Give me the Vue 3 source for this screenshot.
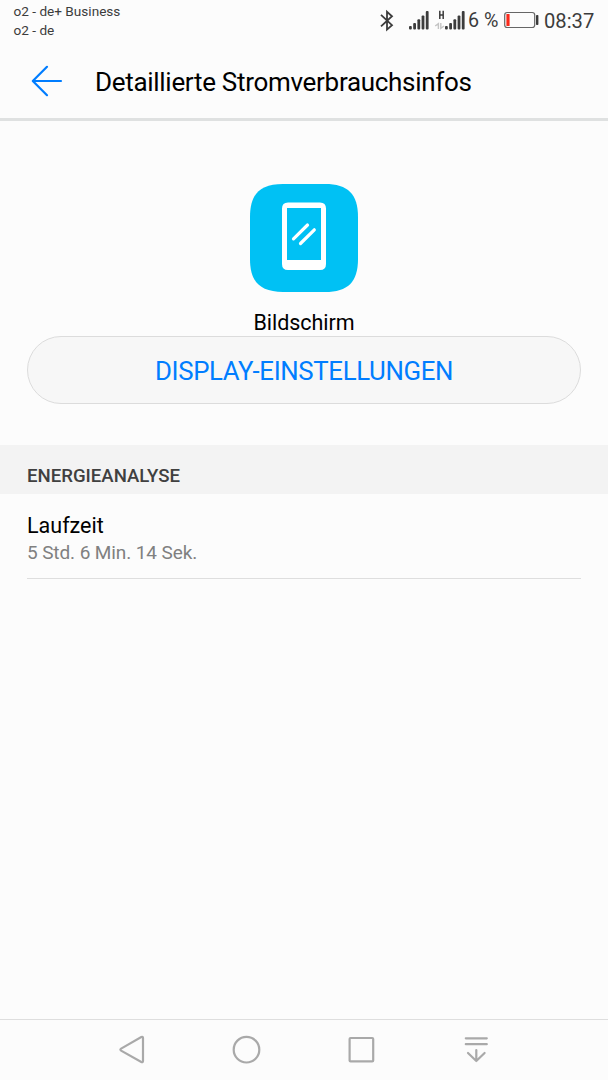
<script setup>
import { ref } from 'vue';

const carriers = ['o2 - de+ Business', 'o2 - de'];
const battery = ref(6);

// x, y (top) and height of the signal bars
const bars = [
  { x: 0, y: 15, h: 3.4 },
  { x: 4.2, y: 12, h: 6.4 },
  { x: 8.4, y: 8.3, h: 10.1 },
  { x: 12.6, y: 4.5, h: 13.9 },
  { x: 16.8, y: 0, h: 18.4 }
];

const details = ref([
  { title: 'Laufzeit', value: '5 Std. 6 Min. 14 Sek.' }
]);
</script>

<template>
  <div class="screen">
    <div class="status-bar">
      <div class="carriers">
        <div v-for="name in carriers" :key="name">{{ name }}</div>
      </div>
      <div class="status-right">
        <svg class="signals" width="90" height="40" viewBox="376 0 90 40">
          <path d="M381 14.8 L392 25.2 L387 29.6 V11.8 L392 16.2 L381 26.4" fill="none" stroke="#3c3c3c" stroke-width="1.8" />
          <g fill="#3c3c3c">
            <rect v-for="b in bars" :key="'a' + b.x" :x="409 + b.x" :y="11 + b.y" width="2.8" :height="b.h" rx="1" />
            <rect v-for="b in bars" :key="'b' + b.x" :x="445 + b.x" :y="11 + b.y" width="2.8" :height="b.h" rx="1" />
          </g>
          <path d="M439.8 10.7 V19 M443.2 10.7 V19 M439.8 15 H443.2" fill="none" stroke="#3c3c3c" stroke-width="1.5" />
          <path d="M435.2 26 L438.4 23.6 V29 M440.8 23 V28.4 L444 26" fill="none" stroke="#c4c4c4" stroke-width="1.4" />
        </svg>
        <span class="percent">{{ battery }} %</span>
        <svg class="battery" width="36" height="20" viewBox="503 10 36 20">
          <rect x="504.7" y="12.5" width="30" height="15" rx="2.5" fill="none" stroke="#666" stroke-width="1.2" />
          <rect x="506.4" y="14" width="3.2" height="12" rx="0.6" fill="#fa2a1b" />
          <rect x="536" y="15" width="2.4" height="10" rx="0.8" fill="#3c3c3c" />
        </svg>
        <span class="clock">08:37</span>
      </div>
    </div>

    <div class="header">
      <svg class="back" width="34" height="34" viewBox="30 64 34 34">
        <path d="M47 66.8 L32.8 81 L47 95.2 M33 81 H61" fill="none" stroke="#007dff" stroke-width="2.2" stroke-linecap="round" stroke-linejoin="round" />
      </svg>
      <h1>Detaillierte Stromverbrauchsinfos</h1>
    </div>

    <div class="app-info">
      <svg width="108" height="108" viewBox="0 0 108 108">
        <path d="M0 33 C0 10 10 0 33 0 H75 C98 0 108 10 108 33 V75 C108 98 98 108 75 108 H33 C10 108 0 98 0 75 Z" fill="#00c1f4" />
        <path fill-rule="evenodd" d="M38 18.5 H70 Q76 18.5 76 24.5 V80 Q76 86 70 86 H38 Q32 86 32 80 V24.5 Q32 18.5 38 18.5 Z M37 24 V76 H71 V24 Z" fill="#fff" />
        <path d="M43.5 54.8 L57.5 41 M50.5 59.5 L64.3 45.8" fill="none" stroke="#fff" stroke-width="3.2" stroke-linecap="round" />
      </svg>
      <div class="app-name">Bildschirm</div>
      <button class="settings-btn">DISPLAY-EINSTELLUNGEN</button>
    </div>

    <div class="section-title">ENERGIEANALYSE</div>
    <div class="list">
      <div v-for="item in details" :key="item.title" class="list-item">
        <div class="item-title">{{ item.title }}</div>
        <div class="item-value">{{ item.value }}</div>
      </div>
    </div>

    <div class="nav-bar">
      <svg width="608" height="60" viewBox="0 1020 608 60" fill="none" stroke="#a9a9a9" stroke-width="2.2">
        <path d="M121.1 1048.6 L141.3 1037 Q143 1036.3 143 1038 V1061 Q143 1062.8 141.3 1062 L121.1 1050.6 Q119.6 1049.6 121.1 1048.6 Z" />
        <circle cx="246.5" cy="1049.7" r="12.8" />
        <rect x="349.6" y="1038" width="23.6" height="23.4" rx="1" />
        <path d="M465.8 1038.3 H486.8 M465.8 1044.2 H486.8 M476.3 1050 V1061 M468 1053 L476.3 1061 L484.6 1053" stroke-linecap="round" stroke-linejoin="round" />
      </svg>
    </div>
  </div>
</template>

<style>
body {
  margin: 0;
  background: #fcfcfc;
}
</style>

<style scoped>
.screen {
  display: flex;
  flex-direction: column;
  width: 608px;
  height: 1080px;
  background: #fcfcfc;
  font-family: Roboto, "Liberation Sans", sans-serif;
  color: #000;
  overflow: hidden;
}

svg {
  display: block;
  flex: none;
}

.status-bar {
  display: flex;
  justify-content: space-between;
  height: 42px;
  color: #3c3c3c;
}
.carriers {
  padding: 2px 0 0 13.5px;
  font-size: 13.6px;
  line-height: 18.6px;
  white-space: nowrap;
}
.status-right {
  display: flex;
  align-items: center;
  height: 40px;
  width: 232px;
  white-space: nowrap;
}
.percent {
  width: 35px;
  padding-left: 2px;
  font-size: 19.7px;
}
.clock {
  padding: 2px 0 0 5px;
  font-size: 20.2px;
}

.header {
  display: flex;
  align-items: center;
  height: 76px;
  padding: 0 30px;
  border-bottom: 3px solid #dfe1e1;
}
.back {
  margin-top: 2px;
}
.header h1 {
  margin: 4px 0 0 31px;
  font-size: 26px;
  font-weight: 400;
  letter-spacing: -0.3px;
  white-space: nowrap;
}

.app-info {
  display: flex;
  flex-direction: column;
  align-items: center;
  height: 261px;
  padding: 63px 27px 0;
}
.app-name {
  height: 27px;
  margin-top: 17px;
  font-size: 21.5px;
  line-height: 27px;
  letter-spacing: -0.05px;
}
.settings-btn {
  box-sizing: border-box;
  width: 100%;
  height: 68px;
  padding: 2px 0 0;
  border: 1px solid #dcdcdc;
  border-radius: 34px;
  background: #f7f7f7;
  color: #007dff;
  font-family: inherit;
  font-size: 25.8px;
  letter-spacing: -0.36px;
}

.section-title {
  box-sizing: border-box;
  height: 49px;
  padding: 19px 27px 0;
  background: #f3f3f3;
  color: #404040;
  font-size: 18.6px;
  font-weight: 500;
  line-height: 25px;
}

.list {
  flex: 1;
  padding: 0 27px;
}
.list-item {
  height: 84px;
  border-bottom: 1px solid #dedede;
}
.item-title {
  padding-top: 18px;
  font-size: 21.5px;
  line-height: 27px;
}
.item-value {
  color: #808080;
  font-size: 19px;
  line-height: 27px;
  letter-spacing: -0.1px;
}

.nav-bar {
  height: 60px;
  border-top: 1px solid #dedede;
}
</style>
